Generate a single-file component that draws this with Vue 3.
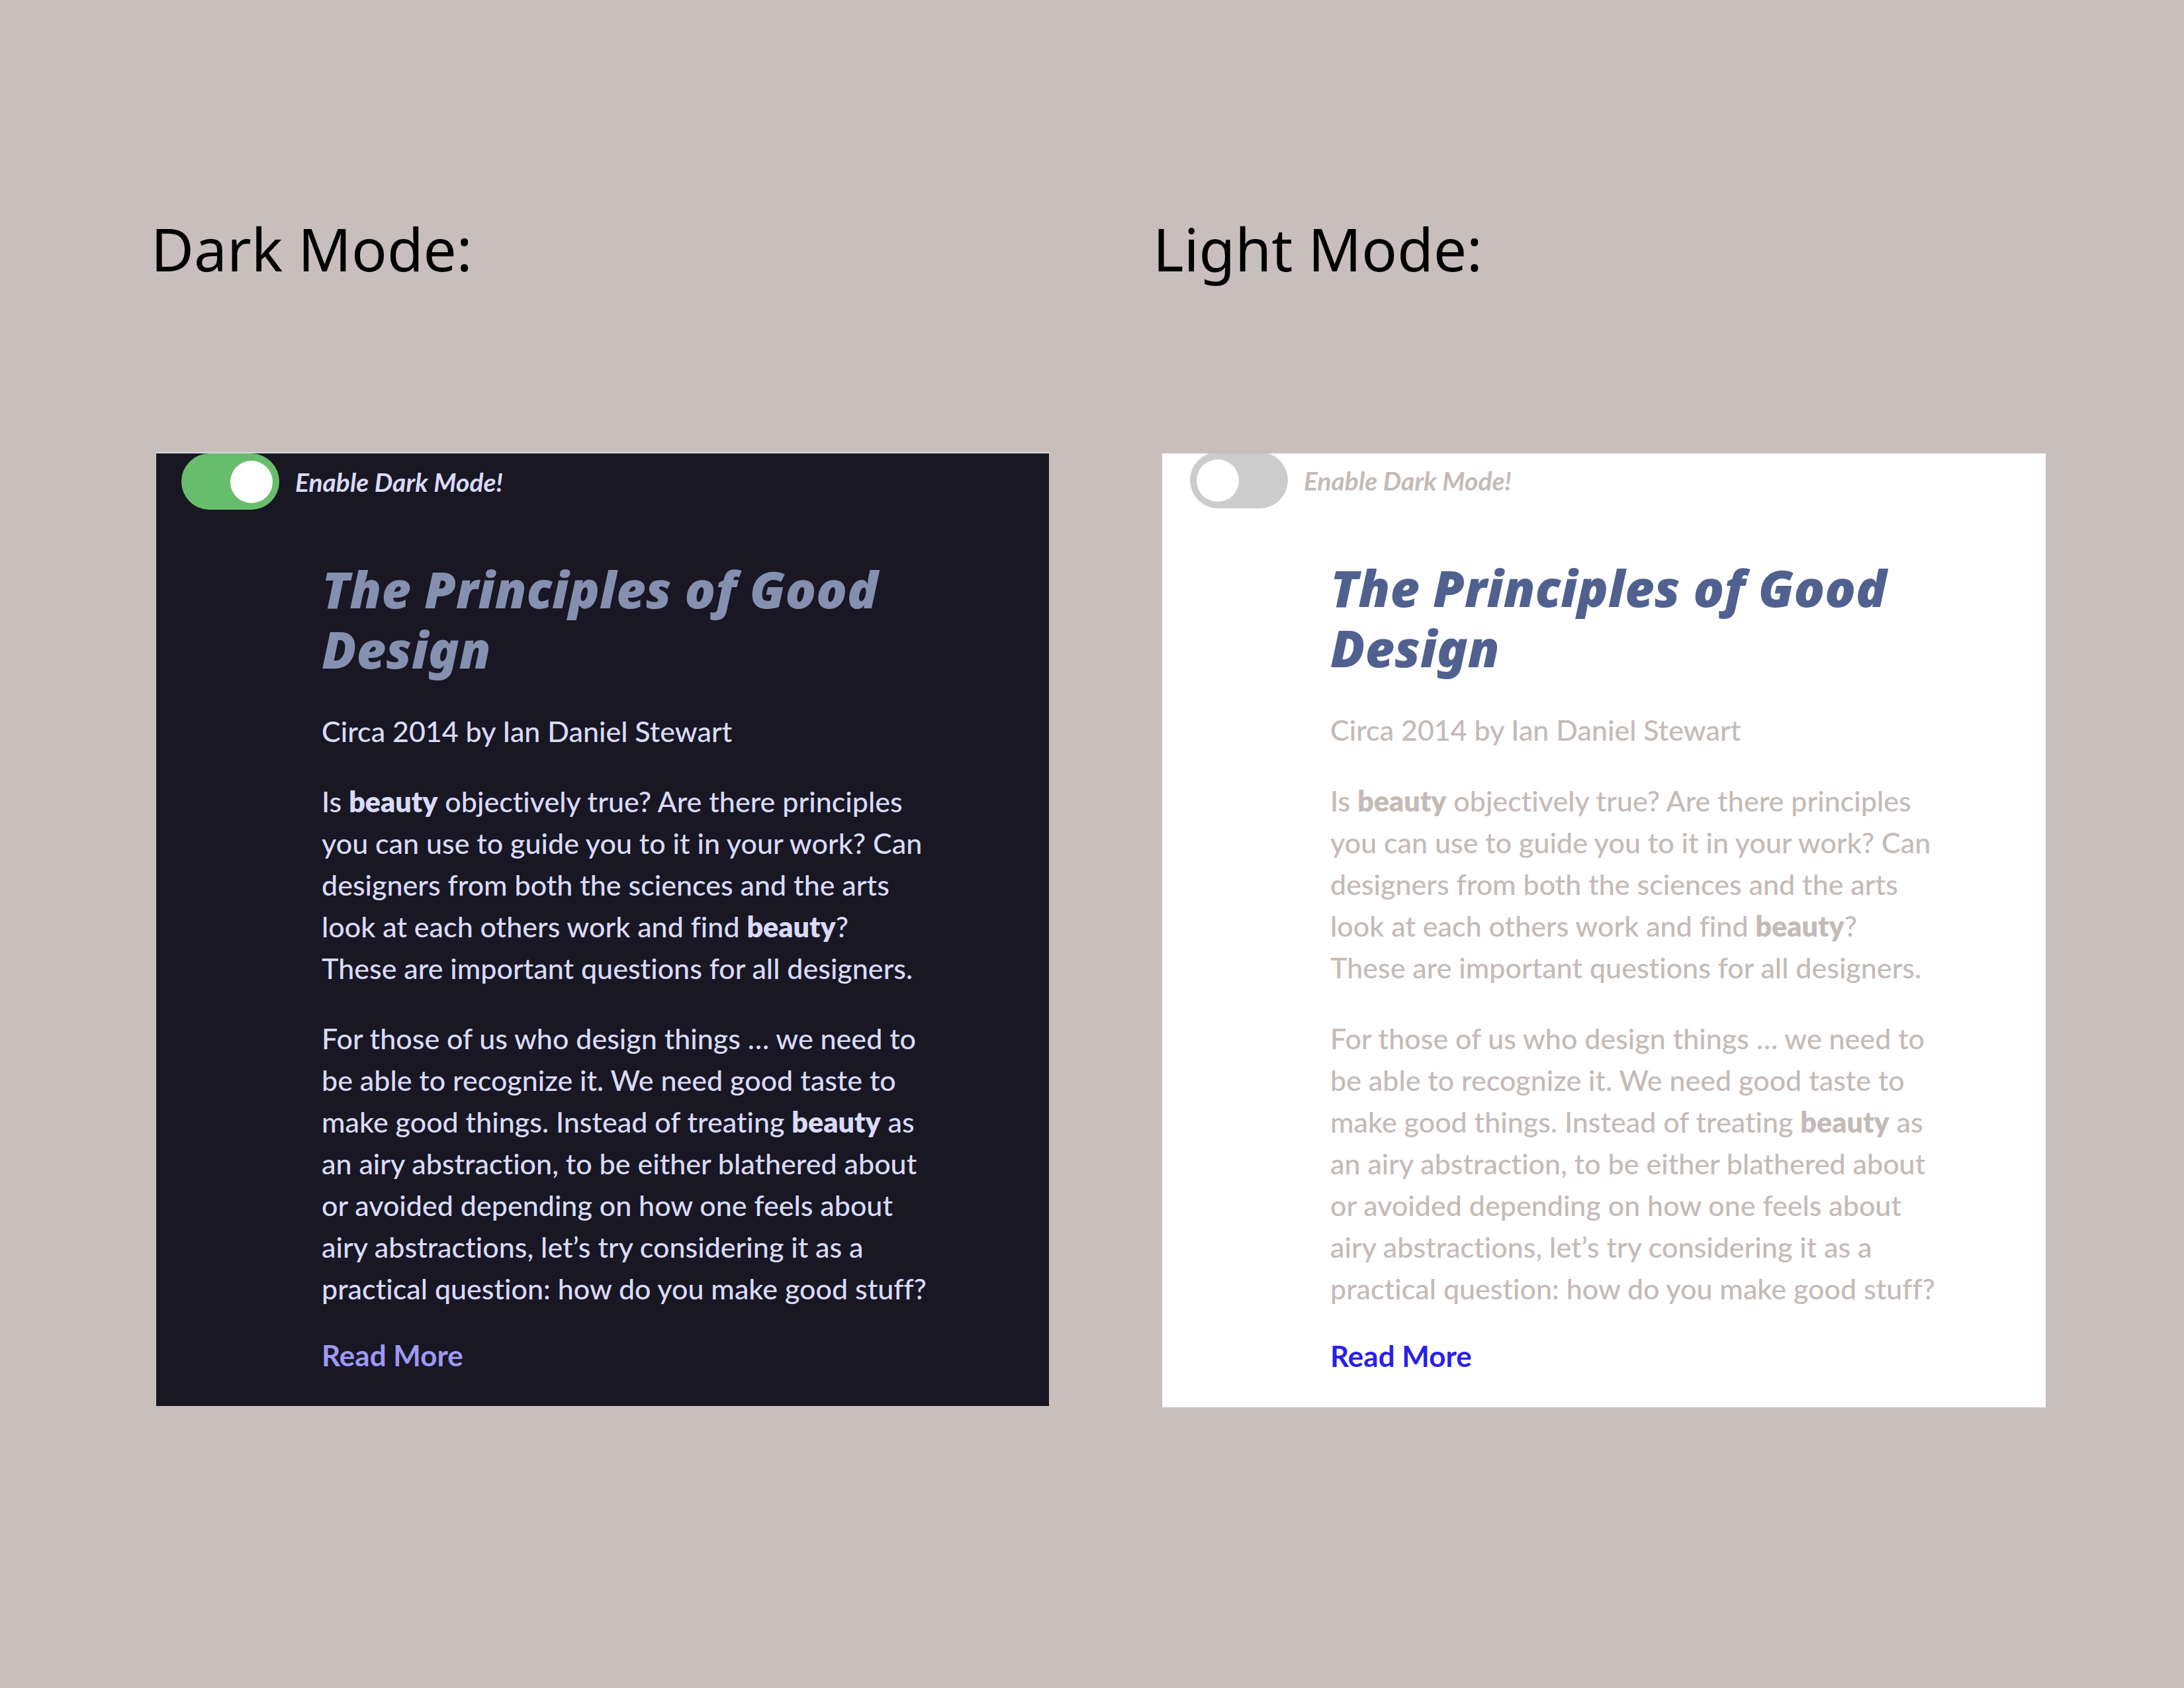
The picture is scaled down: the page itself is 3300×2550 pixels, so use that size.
<script setup>
import { reactive } from 'vue'

const modes = reactive([
  { id: 'dark', heading: 'Dark Mode:', enabled: true },
  { id: 'light', heading: 'Light Mode:', enabled: false },
])
</script>

<template>
  <main class="page">
    <section v-for="mode in modes" :key="mode.id" class="column" :class="mode.id">
      <h1 class="heading">{{ mode.heading }}</h1>
      <article class="panel">
        <div class="switch-row">
          <input :id="`switch-${mode.id}`" v-model="mode.enabled" class="switch" type="checkbox" />
          <label class="switch-label" :for="`switch-${mode.id}`">Enable Dark Mode!</label>
        </div>
        <div class="content">
          <h2 class="title">The Principles of Good<br />Design</h2>
          <p class="text">Circa 2014 by Ian Daniel Stewart</p>
          <p class="text">
            Is <strong>beauty</strong> objectively true? Are there principles<br />
            you can use to guide you to it in your work? Can<br />
            designers from both the sciences and the arts<br />
            look at each others work and find <strong>beauty</strong>?<br />
            These are important questions for all designers.
          </p>
          <p class="text">
            For those of us who design things … we need to<br />
            be able to recognize it. We need good taste to<br />
            make good things. Instead of treating <strong>beauty</strong> as<br />
            an airy abstraction, to be either blathered about<br />
            or avoided depending on how one feels about<br />
            airy abstractions, let’s try considering it as a<br />
            practical question: how do you make good stuff?
          </p>
          <a class="more" href="#">Read More</a>
        </div>
      </article>
    </section>
  </main>
</template>

<style>
body {
  background: #c8bfbc;
}
</style>

<style scoped>
.page {
  display: flex;
  gap: 157px;
  padding: 316px 209px 160px 228px;
  font-family: Lato, "Liberation Sans", sans-serif;
}

.column {
  display: flex;
  flex-direction: column;
  min-width: 0;
}

.dark {
  flex: 1357 1 0;
  --surface: #181723;
  --text: #dadaf8;
  --title: #8590b0;
  --link: #9c99f4;
}

.light {
  flex: 1349 1 0;
  --surface: #ffffff;
  --text: #c3bbb8;
  --title: #50618f;
  --link: #2a20ea;
}

.heading {
  margin: 0 0 247px;
  color: #000;
  font: 400 89px/120px "Noto Sans", "Open Sans", sans-serif;
}

.panel {
  overflow: hidden;
  background: var(--surface);
}

.dark .panel {
  margin-left: 8px;
  padding: 0 38px 45px;
  border-top: 2px solid #d3d8dc;
}

.light .panel {
  margin: 2px 0 0 14px;
  padding: 0 42px 46px;
}

.switch-row {
  display: flex;
  align-items: center;
  gap: 24px;
}

.light .switch-row {
  margin-top: -2px;
}

.switch {
  flex: none;
  box-sizing: border-box;
  width: 148px;
  height: 85px;
  margin: 0;
  padding: 11px 10px 10px;
  border-radius: 43px;
  background: #cccccc;
  appearance: none;
  cursor: pointer;
}

.switch::before {
  display: block;
  width: 64px;
  height: 64px;
  border-radius: 50%;
  background: #fff;
  content: "";
}

.switch:checked {
  background: #68bd6c;
}

.switch:checked::before {
  margin-left: auto;
}

.switch-label {
  color: var(--text);
  font-size: 39px;
  font-style: italic;
  font-weight: 700;
  line-height: 50px;
}

.content {
  padding: 74px 0 0 212px;
}

.title {
  margin: 0 0 47px;
  color: var(--title);
  font: italic 900 77px/91px "Noto Sans", "Open Sans", sans-serif;
}

.text {
  margin: 0 0 43px;
  color: var(--text);
  font-size: 43px;
  font-variant-ligatures: no-common-ligatures;
  font-weight: 500;
  line-height: 63px;
}

.light .text {
  margin-bottom: 44px;
}

.text strong {
  font-weight: 800;
}

.more {
  display: block;
  width: fit-content;
  margin-top: -5px;
  color: var(--link);
  font-size: 44px;
  font-weight: 700;
  line-height: 63px;
  text-decoration: none;
}
</style>
